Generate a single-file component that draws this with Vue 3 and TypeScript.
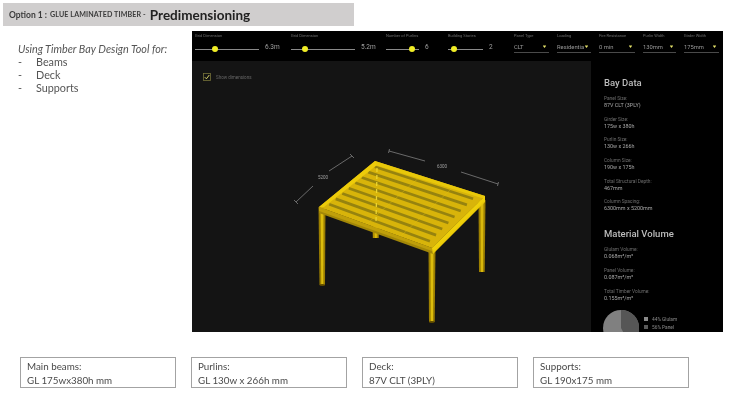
<script setup lang="ts">
interface Slider { label: string; value: string; width: number; knob: number; valueWidth: number }
interface Select { label: string; value: string; width: number }
interface Datum { label: string; value: string }

const sliders: Slider[] = [
  { label: 'Grid Dimension', value: '6.3m', width: 64, knob: 20, valueWidth: 32 },
  { label: 'Grid Dimension', value: '5.2m', width: 64, knob: 14, valueWidth: 31 },
  { label: 'Number of Purlins', value: '6', width: 33, knob: 26, valueWidth: 29 },
  { label: 'Building Stories', value: '2', width: 35, knob: 6, valueWidth: 31 }
]
const selects: Select[] = [
  { label: 'Panel Type', value: 'CLT', width: 35 },
  { label: 'Loading', value: 'Residentia', width: 34 },
  { label: 'Fire Resistance', value: '0 min', width: 36 },
  { label: 'Purlin Width', value: '130mm', width: 33 },
  { label: 'Girder Width', value: '175mm', width: 35 }
]
const bayData: Datum[] = [
  { label: 'Panel Size:', value: '87V CLT (3PLY)' },
  { label: 'Girder Size:', value: '175w x 380h' },
  { label: 'Purlin Size:', value: '130w x 266h' },
  { label: 'Column Size:', value: '190w x 175h' },
  { label: 'Total Structural Depth:', value: '467mm' },
  { label: 'Column Spacing:', value: '6300mm x 5200mm' }
]
const volumes: Datum[] = [
  { label: 'Glulam Volume:', value: '0.068m³/m²' },
  { label: 'Panel Volume:', value: '0.087m³/m²' },
  { label: 'Total Timber Volume:', value: '0.155m³/m²' }
]
const boxes: Datum[] = [
  { label: 'Main beams:', value: 'GL 175wx380h mm' },
  { label: 'Purlins:', value: 'GL 130w x 266h mm' },
  { label: 'Deck:', value: '87V CLT (3PLY)' },
  { label: 'Supports:', value: 'GL 190x175 mm' }
]

// Roof corners: back (375,161) right (485,196) front (432,248) left (319,207)
const lerp = (a: number, b: number, t: number) => a + (b - a) * t
const purlins = Array.from({ length: 8 }, (_, i) => {
  const t = (i + 0.8) / 8.6
  return {
    x1: lerp(375, 319, t) + 5,
    y1: lerp(161, 207, t) + 1.5,
    x2: lerp(485, 432, t) - 7,
    y2: lerp(196, 248, t) - 2
  }
})
const seams = [0.42, 0.72].map((t) => ({
  x1: lerp(375, 485, t),
  y1: lerp(161, 196, t),
  x2: lerp(319, 432, t),
  y2: lerp(207, 248, t)
}))
</script>

<template>
  <div class="page">
    <header class="title">
      <span class="opt">Option 1 :</span>
      <span class="glue">GLUE LAMINATED TIMBER -</span>
      <span class="pre">Predimensioning</span>
    </header>

    <main class="main">
      <section class="intro">
        <p class="lead">Using Timber Bay Design Tool for:</p>
        <ul class="list">
          <li><span class="dash">-</span>Beams</li>
          <li><span class="dash">-</span>Deck</li>
          <li><span class="dash">-</span>Supports</li>
        </ul>
      </section>

      <section class="app">
        <div class="toolbar">
          <div v-for="(s, i) in sliders" :key="i" class="slider">
            <div class="ctl-label">{{ s.label }}</div>
            <div class="slider-row">
              <div class="track" :style="{ width: s.width + 'px' }">
                <i class="knob" :style="{ left: s.knob + 'px' }"></i>
              </div>
              <span class="slider-val" :style="{ width: s.valueWidth + 'px' }">{{ s.value }}</span>
            </div>
          </div>
          <div v-for="(s, i) in selects" :key="'s' + i" class="select" :style="{ width: s.width + 'px' }">
            <div class="ctl-label">{{ s.label }}</div>
            <div class="select-row">
              <span>{{ s.value }}</span>
              <i class="arrow"></i>
            </div>
          </div>
        </div>

        <div class="body">
          <div class="canvas">
            <label class="check">
              <svg width="8" height="8" viewBox="0 0 8 8">
                <rect x="0.5" y="0.5" width="7" height="7" fill="none" stroke="#77733a" stroke-width="0.8" />
                <path d="M1.8 4.2 3.4 5.8 6.3 2" fill="none" stroke="#d8d468" stroke-width="1" />
              </svg>
              <span>Show dimensions</span>
            </label>

            <svg class="scene" viewBox="192 61 399 271" width="399" height="271">
              <g stroke="#808080" stroke-width="0.8" fill="none">
                <path d="M296 202 313 186M329 171 352 156M294 200 298 204M350 154 354 158" />
                <path d="M389 151 425 161M461 172 498 184M388.500 153 389.500 149M497.500 186 498.500 182" />
              </g>
              <text x="323" y="179" class="dim" text-anchor="middle">5200</text>
              <text x="442" y="168" class="dim" text-anchor="middle">6300</text>

              <!-- back column -->
              <polygon points="372.500,200 379,200 378.700,238 372.800,238" fill="#b08f00" />
              <polygon points="374.500,200 377,200 376.800,238 374.800,238" fill="#dcb90c" />
              <!-- right column -->
              <polygon points="478.500,200 485.500,200 484.700,272 479,272" fill="#9c7f00" />
              <polygon points="480.500,200 483.500,200 483,272 480.800,272" fill="#d9b80c" />
              <!-- left column -->
              <polygon points="318.500,207 325.500,207 325,285 319.500,285" fill="#9a7d00" />
              <polygon points="320.500,207 323.500,207 323.300,285 321.300,285" fill="#dcbc0c" />
              <ellipse cx="322.300" cy="285" rx="2.800" ry="1.100" fill="#5f4b00" />
              <!-- front column -->
              <polygon points="428.500,248 435.500,248 434.700,322 429,322" fill="#9c7f00" />
              <polygon points="430.500,248 433.500,248 433,322 430.800,322" fill="#dcbc0c" />
              <ellipse cx="431.800" cy="322" rx="2.900" ry="1.100" fill="#5f4b00" />

              <!-- fascia below the roof -->
              <polygon points="319,207 432,248 433,254 319,213" fill="#a28708" />
              <polygon points="432,248 485,196 485,202 433,254" fill="#e8c808" />

              <!-- roof deck -->
              <polygon points="375,161 485,196 432,248 319,207" fill="#d8b40a" />
              <line
                v-for="(p, i) in purlins"
                :key="i"
                :x1="p.x1"
                :y1="p.y1"
                :x2="p.x2"
                :y2="p.y2"
                stroke="#96830f"
                stroke-width="2.700"
              />
              <line
                v-for="(p, i) in seams"
                :key="'m' + i"
                :x1="p.x1"
                :y1="p.y1"
                :x2="p.x2"
                :y2="p.y2"
                stroke="#e0bf14"
                stroke-width="0.8"
                opacity="0.5"
              />
              <polygon points="375,161 485,196 485,199 375,165" fill="#e8c80a" />
              <polygon points="375,161 319,207 324,207 377,165" fill="#edcc0a" />
              <line x1="377" y1="168" x2="376" y2="224" stroke="#ecd530" stroke-width="1.300" stroke-dasharray="4 3" />
              <polygon points="432,248 485,196 485,200 434,251" fill="#efd00a" />
              <polygon points="319,207 432,248 432,251 319,211" fill="#bf9f0a" />
            </svg>
          </div>

          <aside class="side">
            <h2 class="side-h first">Bay Data</h2>
            <div v-for="(d, i) in bayData" :key="i" class="datum">
              <div class="datum-l">{{ d.label }}</div>
              <div class="datum-v">{{ d.value }}</div>
            </div>
            <h2 class="side-h second">Material Volume</h2>
            <div v-for="(d, i) in volumes" :key="'v' + i" class="datum vol">
              <div class="datum-l">{{ d.label }}</div>
              <div class="datum-v">{{ d.value }}</div>
            </div>
            <div class="chart">
              <svg width="36" height="36" viewBox="0 0 36 36">
                <circle cx="18" cy="18" r="18" fill="#808080" />
                <path d="M18 18V0A18 18 0 0 1 26.500 34Z" fill="#565656" />
              </svg>
              <div class="legend">
                <div><i class="sw light"></i>44% Glulam</div>
                <div><i class="sw dark"></i>56% Panel</div>
              </div>
            </div>
          </aside>
        </div>
      </section>
    </main>

    <footer class="boxes">
      <div v-for="(b, i) in boxes" :key="i" class="box">
        <div>{{ b.label }}</div>
        <div>{{ b.value }}</div>
      </div>
    </footer>
  </div>
</template>

<style scoped>
.page {
  width: 730px;
  height: 401px;
  overflow: hidden;
  padding: 3px 0 0;
  box-sizing: border-box;
  font-family: Lato, "Open Sans", sans-serif;
  background: #fff;
  color: #444;
}
.title {
  width: 351px;
  height: 23px;
  margin-left: 3px;
  padding-left: 6px;
  box-sizing: border-box;
  background: #d0cece;
  display: flex;
  align-items: center;
  gap: 3px;
  font-weight: 700;
  color: #3a3a3a;
  white-space: nowrap;
  filter: blur(0.3px);
}
.opt { font-size: 8.500px; }
.glue { font-size: 7.100px; letter-spacing: 0.12px; }
.pre { font-size: 13.500px; color: #222; margin-left: 1px; }

.main {
  display: flex;
  margin-top: 5px;
}
.intro {
  width: 192px;
  flex: none;
  padding: 11px 0 0 18px;
  box-sizing: border-box;
  font-size: 10.800px;
  color: #555;
  filter: blur(0.25px);
}
.lead {
  margin: 0;
  font-style: italic;
  line-height: 13px;
  white-space: nowrap;
}
.list {
  list-style: none;
  margin: 0;
  padding: 0;
  line-height: 13.200px;
}
.dash {
  display: inline-block;
  width: 18px;
}

.app {
  width: 531px;
  height: 301px;
  flex: none;
  background: #000;
  display: flex;
  flex-direction: column;
  overflow: hidden;
}
.toolbar {
  height: 30px;
  flex: none;
  display: flex;
  padding-left: 3px;
  box-sizing: border-box;
  filter: blur(0.35px);
}
.ctl-label {
  font-family: Roboto, sans-serif;
  font-size: 4px;
  line-height: 5px;
  padding-top: 2px;
  color: #6d6d6d;
  white-space: nowrap;
}
.slider-row {
  display: flex;
  align-items: center;
  height: 12px;
  margin-top: 5px;
}
.track {
  position: relative;
  height: 1px;
  background: #8a8a8a;
  flex: none;
}
.knob {
  position: absolute;
  top: -2.500px;
  width: 6px;
  height: 6px;
  margin-left: -3px;
  border-radius: 50%;
  background: #f1ee26;
}
.slider-val {
  box-sizing: border-box;
  padding: 0 0 4px 6px;
  font-family: Roboto, sans-serif;
  font-size: 6.500px;
  color: #a0a0a0;
  flex: none;
}
.select {
  flex: none;
  margin-right: 8px;
}
.select-row {
  display: flex;
  justify-content: space-between;
  align-items: center;
  height: 11px;
  margin-top: 3px;
  border-bottom: 1px solid #4a4a4a;
  font-family: Roboto, sans-serif;
  font-size: 5.800px;
  color: #9a9a9a;
  white-space: nowrap;
  overflow: hidden;
}
.arrow {
  width: 3px;
  height: 3px;
  margin-right: 3px;
  flex: none;
  background: #e6e36a;
  clip-path: polygon(0 20%, 100% 20%, 50% 90%);
  transform: scale(1.2);
}

.body {
  flex: 1;
  min-height: 0;
  display: flex;
}
.canvas {
  position: relative;
  width: 399px;
  flex: none;
  background: #141414;
}
.check {
  position: absolute;
  left: 11px;
  top: 12px;
  display: flex;
  align-items: center;
  gap: 5px;
  font-family: Roboto, sans-serif;
  font-size: 4.500px;
  color: #666;
  filter: blur(0.3px);
}
.scene {
  display: block;
  filter: blur(0.45px);
}
.dim {
  font-family: Roboto, sans-serif;
  font-size: 4.500px;
  fill: #a0a0a0;
}

.side {
  flex: 1;
  min-width: 0;
  padding-left: 13px;
  font-family: Roboto, sans-serif;
  filter: blur(0.35px);
}
.side-h {
  margin: 0;
  font-weight: 500;
  color: #bdbdbd;
  white-space: nowrap;
}
.first {
  font-size: 9.500px;
  line-height: 12px;
  padding-top: 16px;
  margin-bottom: 7px;
}
.second {
  font-size: 9.500px;
  line-height: 12px;
  margin-top: 7.500px;
  margin-bottom: 7px;
}
.datum { height: 20.700px; }
.vol { height: 21px; }
.datum-l {
  font-size: 4.800px;
  line-height: 6px;
  color: #6e6e6e;
  white-space: nowrap;
}
.datum-v {
  font-size: 5.400px;
  line-height: 7px;
  color: #a8a8a8;
  white-space: nowrap;
}
.chart {
  display: flex;
  gap: 5px;
  margin-left: -1px;
  margin-top: 0;
}
.chart svg { flex: none; }
.legend {
  padding-top: 6px;
  font-size: 4.800px;
  line-height: 8.500px;
  color: #8c8c8c;
  white-space: nowrap;
}
.sw {
  display: inline-block;
  width: 4px;
  height: 4px;
  margin-right: 4px;
}
.light { background: #8a8a8a; }
.dark { background: #5a5a5a; }

.boxes {
  display: flex;
  gap: 15px;
  margin-top: 25px;
  padding-left: 20px;
}
.box {
  width: 156px;
  height: 31px;
  box-sizing: border-box;
  border: 1px solid #a3a3a3;
  padding: 2px 0 0 6px;
  font-size: 9.800px;
  line-height: 13.500px;
  color: #4a4a4a;
  white-space: nowrap;
  filter: blur(0.25px);
}
</style>

<style>
html,
body {
  margin: 0;
  background: #fff;
}
</style>
